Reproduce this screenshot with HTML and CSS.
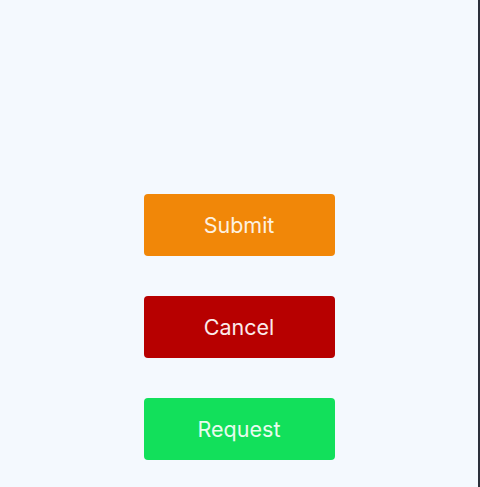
FILE: index.html
```html
<!DOCTYPE html>
<html>
<head>
<meta charset="utf-8">
<link rel="stylesheet" href="styles.css">
</head>
<body>
<main class="screen">
  <div class="actions">
    <button class="btn btn-submit">Submit</button>
    <button class="btn btn-cancel">Cancel</button>
    <button class="btn btn-request">Request</button>
  </div>
</main>
</body>
</html>
```

FILE: styles.css
```css
html, body {
  margin: 0;
  padding: 0;
  background: #f4f9fe;
}
.screen {
  box-sizing: border-box;
  width: 480px;
  height: 487px;
  border-right: 2px solid #2b303a;
  background: #f4f9fe;
  overflow: hidden;
}
.actions {
  display: flex;
  flex-direction: column;
  align-items: center;
  gap: 40px;
  padding-top: 194px;
}
.btn {
  width: 191px;
  height: 62px;
  border: none;
  border-radius: 4px;
  color: #ffffff;
  font-family: Inter, "Liberation Sans", sans-serif;
  font-size: 21.5px;
  font-weight: 400;
  padding: 0;
  margin: 0;
}
.btn-submit { background: #f18708; color: #fdf1e0; }
.btn-cancel { background: #b70000; color: #fbeaea; }
.btn-request { background: #12e05b; color: #e9fbef; }
```
